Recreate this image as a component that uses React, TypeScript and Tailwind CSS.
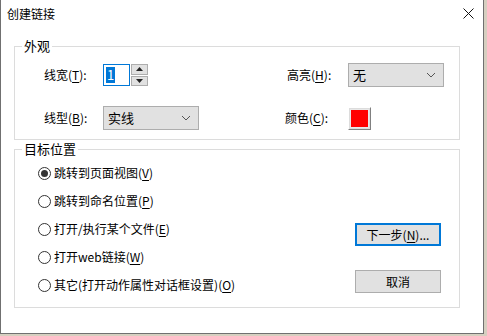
import React from "react";

const font = { fontFamily: '"Noto Sans CJK SC", "Noto Sans", sans-serif' };

function Key({ k }: { k: string }) {
  return (
    <>
      (<span className="underline underline-offset-2">{k}</span>)
    </>
  );
}

function Chevron() {
  return (
    <svg width="10" height="6" viewBox="0 0 10 6" className="text-[#555]">
      <path d="M1 1 L5 5 L9 1" fill="none" stroke="currentColor" strokeWidth="1" />
    </svg>
  );
}

function Select({ value, width }: { value: string; width: string }) {
  return (
    <div
      className={`flex h-[24px] ${width} items-center justify-between border border-[#adadad] bg-[#e1e1e1] pl-[4px] pr-[7px]`}
    >
      <span className="text-[13px]">{value}</span>
      <Chevron />
    </div>
  );
}

function Radio({ checked, children }: { checked?: boolean; children: React.ReactNode }) {
  return (
    <div className="flex h-[28px] items-center">
      <div className="flex h-[13px] w-[13px] items-center justify-center rounded-full border border-[#333] bg-white">
        {checked && <div className="h-[7px] w-[7px] rounded-full bg-[#333]" />}
      </div>
      <span className="ml-[3px] text-[12px] leading-none">{children}</span>
    </div>
  );
}

export default function App() {
  return (
    <div className="h-[336px] w-[487px] bg-[#d6cfc0]" style={font}>
      <div className="flex h-[334px] w-[484px] flex-col border-x border-b border-[#707070] bg-white text-black">
        <div className="flex h-[27px] items-center justify-between pl-[6px] pr-[9px]">
          <span className="text-[12px]">创建链接</span>
          <svg width="11" height="11" viewBox="0 0 11 11">
            <path d="M0.5 0.5 L10.5 10.5 M10.5 0.5 L0.5 10.5" stroke="#111" strokeWidth="1" />
          </svg>
        </div>

        <div className="mt-[19px] ml-[13px] w-[446px]">
          <div className="relative border border-[#dcdcdc] pb-[9px] pl-[29px] pt-[16px]">
            <span className="absolute -top-[10px] left-[7px] bg-white px-[2px] text-[13px] leading-[18px]">外观</span>
            <div className="flex h-[24px] items-center">
              <span className="w-[59px] text-[12px]">
                线宽<Key k="T" />:
              </span>
              <div className="flex h-[22px] w-[27px] items-center border border-[#0078d7] pl-[2px]">
                <span className="bg-[#0078d7] px-[1px] text-[13px] leading-[16px] text-white">1</span>
              </div>
              <div className="ml-[1px] flex h-[22px] w-[17px] flex-col gap-[1px]">
                <div className="flex flex-1 items-center justify-center border border-[#adadad] bg-[#e1e1e1]">
                  <svg width="7" height="4" viewBox="0 0 7 4"><path d="M0 4 L3.5 0 L7 4Z" fill="#222" /></svg>
                </div>
                <div className="flex flex-1 items-center justify-center border border-[#adadad] bg-[#e1e1e1]">
                  <svg width="7" height="4" viewBox="0 0 7 4"><path d="M0 0 L3.5 4 L7 0Z" fill="#222" /></svg>
                </div>
              </div>
              <span className="ml-[139px] w-[61px] text-[12px]">
                高亮<Key k="H" />:
              </span>
              <Select value="无" width="w-[96px]" />
            </div>
            <div className="mt-[19px] flex h-[24px] items-center">
              <span className="w-[59px] text-[12px]">
                线型<Key k="B" />:
              </span>
              <Select value="实线" width="w-[96px]" />
              <span className="ml-[86px] w-[63px] text-[12px]">
                颜色<Key k="C" />:
              </span>
              <div className="h-[23px] w-[23px] border border-b-[#808080] border-l-white border-r-[#808080] border-t-white bg-[#dcdcdc] p-[1px]">
                <div className="h-full w-full border border-[#e8e8e8] bg-[#ff0000]" />
              </div>
            </div>
          </div>

          <div className="relative mt-[9px] flex border border-[#dcdcdc] pb-[8px] pl-[23px] pr-[18px] pt-[9px]">
            <span className="absolute -top-[10px] left-[7px] bg-white px-[2px] text-[13px] leading-[18px]">目标位置</span>
            <div className="flex flex-1 flex-col">
              <Radio checked>
                跳转到页面视图<Key k="V" />
              </Radio>
              <Radio>
                跳转到命名位置<Key k="P" />
              </Radio>
              <Radio>
                打开/执行某个文件<Key k="E" />
              </Radio>
              <Radio>
                打开web链接<Key k="W" />
              </Radio>
              <Radio>
                其它(打开动作属性对话框设置)<Key k="O" />
              </Radio>
            </div>
            <div className="mt-[64px] flex flex-col gap-[24px]">
              <button className="flex h-[23px] w-[86px] items-center justify-center border-2 border-[#0078d7] bg-[#e1e1e1] text-[12px]">
                下一步<Key k="N" />...
              </button>
              <button className="flex h-[23px] w-[86px] items-center justify-center border border-[#adadad] bg-[#e1e1e1] text-[12px]">
                取消
              </button>
            </div>
          </div>
        </div>
      </div>
    </div>
  );
}
